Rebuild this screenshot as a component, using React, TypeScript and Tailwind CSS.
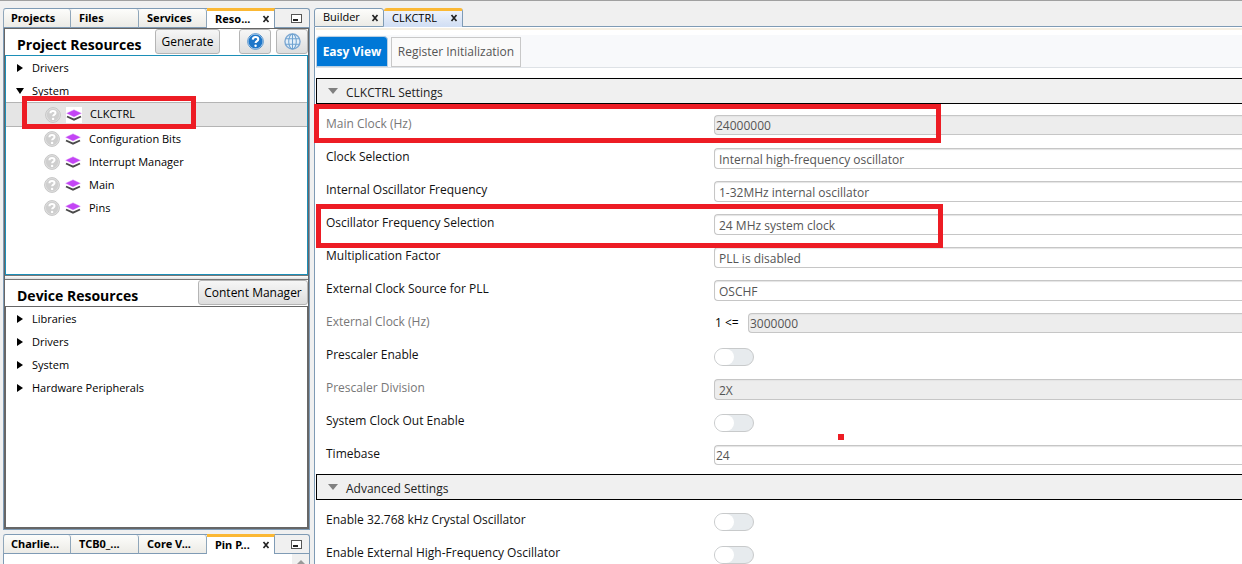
import React from "react";

const MARK = "pointer-events-none absolute z-10 border-5 border-[#ed1c24]";

function CloseIcon() {
  return (
    <svg viewBox="0 0 8 8" className="size-2 shrink-0" aria-hidden="true">
      <path d="M1.500 1l5 6M6.500 1l-5 6" stroke="#222" strokeWidth="1.700" fill="none" />
    </svg>
  );
}

function MinimizeIcon() {
  return (
    <svg viewBox="0 0 11 9" className="h-[9px] w-[11px]" aria-hidden="true">
      <rect x="0.500" y="0.500" width="10" height="8" fill="#fff" stroke="#555" />
      <rect x="2" y="5" width="5" height="2" fill="#222" />
    </svg>
  );
}

function HelpIcon() {
  return (
    <svg viewBox="0 0 18 18" className="size-[17px]" aria-hidden="true">
      <circle cx="9" cy="9" r="8.300" fill="#fff" stroke="#3f86c8" strokeWidth="1" />
      <circle cx="9" cy="9" r="7.500" fill="#1d76c9" />
      <path
        d="M6.100 7c.1-1.900 1.200-2.700 2.900-2.700 1.800 0 2.900.9 2.900 2.300 0 2-2.700 2.100-2.800 4"
        fill="none"
        stroke="#fff"
        strokeWidth="2.200"
      />
      <circle cx="9.100" cy="13.400" r="1.300" fill="#fff" />
    </svg>
  );
}

function GlobeIcon() {
  return (
    <svg viewBox="0 0 18 18" className="size-[17px]" aria-hidden="true">
      <circle cx="9" cy="9" r="8" fill="#e4eff9" stroke="#7fa9d3" strokeWidth="1.500" />
      <ellipse cx="9" cy="9" rx="4" ry="8" fill="none" stroke="#6fa3d0" strokeWidth="1.100" />
      <path d="M9 1v16M1.700 6h14.600M1.700 12h14.600" fill="none" stroke="#6fa3d0" strokeWidth="1.100" />
    </svg>
  );
}

function FadedHelpIcon() {
  return (
    <svg viewBox="0 0 16 16" className="size-4 shrink-0" aria-hidden="true">
      <circle cx="8" cy="8" r="7.400" fill="#e2e2e2" stroke="#c6c6c6" strokeWidth="1" />
      <circle cx="8" cy="8" r="6.200" fill="#cfcfcf" />
      <path
        d="M5.400 6.300c.1-1.600 1.100-2.300 2.600-2.300 1.600 0 2.500.7 2.500 1.900 0 1.700-2.300 1.700-2.400 3.400"
        fill="none"
        stroke="#fff"
        strokeWidth="2"
      />
      <circle cx="8.100" cy="11.900" r="1.200" fill="#fff" />
    </svg>
  );
}

function LayersIcon() {
  return (
    <svg viewBox="0 0 16 16" className="size-4 shrink-0 bg-white" aria-hidden="true">
      <path d="M1 9.500l7 3.200 7-3.200" fill="none" stroke="#4a4a4a" strokeWidth="1.900" />
      <path d="M0 6.200L8 2.600l8 3.600-8 4z" fill="#c345f5" stroke="#fff" strokeWidth="0.500" />
    </svg>
  );
}

function DockTabs({ titles, label }: { titles: string[]; label: string }) {
  const last = titles.length - 1;
  return (
    <div
      role="tablist"
      aria-label={label}
      className="flex h-5 shrink-0 rounded-t-[3px] border-t border-r border-[#7f9bb5] bg-[#f0f0f0] font-['Noto_Sans',sans-serif] text-[11px] font-bold"
    >
      {titles.map((title, i) =>
        i === last ? (
          <button
            key={title}
            role="tab"
            aria-selected="true"
            className="-mt-px flex w-[68px] items-center justify-between border-r border-t-3 border-r-[#7f9bb5] border-t-[#fbb834] bg-white pr-1 pb-px pl-2 leading-4"
          >
            {title}
            <CloseIcon />
          </button>
        ) : (
          <button
            key={title}
            role="tab"
            aria-selected="false"
            className="w-[68px] rounded-t-[3px] border-r border-b border-[#8fa6ba] border-b-[#7f9bb5] bg-linear-to-b from-[#fdfdfb] to-[#ecebe6] pl-2 text-left leading-[18px] first:border-l first:pl-[7px]"
          >
            {title}
          </button>
        )
      )}
      <button aria-label="Minimize" className="flex flex-1 items-center justify-center border-b border-[#7f9bb5] pl-2">
        <MinimizeIcon />
      </button>
    </div>
  );
}

const TOOL_BUTTON =
  "flex h-[25px] items-center justify-center rounded-[3px] border border-[#b5b5b5] bg-linear-to-b from-[#f6f6f6] to-[#dedede]";

function Branch({ title, open = false }: { title: string; open?: boolean }) {
  return (
    <div role="treeitem" aria-expanded={open} className="flex h-[23px] items-center gap-2 pl-[10px]">
      <svg viewBox="0 0 8 8" className="size-2" aria-hidden="true">
        <path d={open ? "M0 1h8L4 7z" : "M1 0l6 4-6 4z"} />
      </svg>
      <span className="pt-[2px]">{title}</span>
    </div>
  );
}

function Leaf({ title }: { title: string }) {
  return (
    <div role="treeitem" className="flex h-[23px] items-center gap-[5px] pl-[38px]">
      <FadedHelpIcon />
      <LayersIcon />
      <span className="pt-[2px] pl-[3px]">{title}</span>
    </div>
  );
}

type Field = {
  label: string;
  kind: "text" | "select" | "toggle";
  value?: string;
  disabled?: boolean;
  prefix?: string;
};

const CLOCK: Field[] = [
  { label: "Main Clock (Hz)", kind: "text", value: "24000000", disabled: true },
  { label: "Clock Selection", kind: "select", value: "Internal high-frequency oscillator" },
  { label: "Internal Oscillator Frequency", kind: "select", value: "1-32MHz internal oscillator" },
  { label: "Oscillator Frequency Selection", kind: "select", value: "24 MHz system clock" },
  { label: "Multiplication Factor", kind: "select", value: "PLL is disabled" },
  { label: "External Clock Source for PLL", kind: "select", value: "OSCHF" },
  { label: "External Clock (Hz)", kind: "text", value: "3000000", disabled: true, prefix: "1 <=" },
  { label: "Prescaler Enable", kind: "toggle" },
  { label: "Prescaler Division", kind: "select", value: "2X", disabled: true },
  { label: "System Clock Out Enable", kind: "toggle" },
  { label: "Timebase", kind: "text", value: "24" },
];

const ADVANCED: Field[] = [
  { label: "Enable 32.768 kHz Crystal Oscillator", kind: "toggle" },
  { label: "Enable External High-Frequency Oscillator", kind: "toggle" },
];

function FieldRow({ field }: { field: Field }) {
  const id = field.label.toLowerCase().replace(/[^a-z0-9]+/g, "-");
  const box =
    "min-w-0 flex-1 appearance-none rounded-l-[4px] border border-r-0 border-[#c6c6c6] text-[#555] leading-[18px] shadow-[inset_0_1px_1px_#e4e4e4]";
  return (
    <div className="flex h-[21px] pl-[10px]">
      <label
        htmlFor={id}
        className={`w-[388px] shrink-0 leading-[18px] ${field.disabled ? "text-[#777]" : "text-[#111]"}`}
      >
        {field.label}
      </label>
      {field.prefix && <span className="w-[34px] shrink-0 pl-px leading-5">{field.prefix}</span>}
      {field.kind === "text" && (
        <input
          id={id}
          defaultValue={field.value}
          disabled={field.disabled}
          className={`${box} h-5 pt-px pl-px disabled:bg-[#ededed]`}
        />
      )}
      {field.kind === "select" && (
        <select
          id={id}
          disabled={field.disabled}
          className={`${box} h-[21px] bg-white pt-[2px] pl-1 opacity-100 disabled:bg-[#ededed] disabled:opacity-100`}
        >
          <option>{field.value}</option>
        </select>
      )}
      {field.kind === "toggle" && (
        <input
          id={id}
          type="checkbox"
          className="mt-[2px] h-[18px] w-10 appearance-none rounded-full border border-[#c8cacb] bg-[#e7ebee] before:block before:h-4 before:w-[19px] before:rounded-full before:bg-white"
        />
      )}
    </div>
  );
}

function Section({ title, fields }: { title: string; fields: Field[] }) {
  return (
    <section>
      <button
        aria-expanded="true"
        className="flex h-[26px] w-full items-center gap-2 border border-r-0 border-black bg-[#f0f0f0] pt-1 pl-[11px] text-[#222]"
      >
        <svg viewBox="0 0 10 6" className="mb-1 h-[6px] w-[10px]" aria-hidden="true">
          <path d="M0 0h10L5 6z" fill="#808080" />
        </svg>
        {title}
      </button>
      <div className="flex flex-col gap-3 pt-[11px] pb-2">
        {fields.map((f) => (
          <FieldRow key={f.label} field={f} />
        ))}
      </div>
    </section>
  );
}

export default function App() {
  return (
    <div className="flex h-screen gap-1 overflow-hidden border-t border-[#a0a0a0] bg-[#f0f0f0] pt-[7px] pl-[3px] font-['Open_Sans','Noto_Sans',sans-serif] text-black">
      <aside className="relative flex w-[307px] shrink-0 flex-col text-[11px]">
        <DockTabs label="Project windows" titles={["Projects", "Files", "Services", "Reso..."]} />
        <div className="flex min-h-0 flex-1 flex-col border-x border-b border-[#7f9bb5]">
          <div className="flex min-h-0 flex-1 flex-col border border-b-2 border-[#666] bg-white">
            <div className="flex h-[26px] shrink-0">
              <h2 className="w-[150px] pt-[6px] pl-3 text-sm leading-5 font-bold whitespace-nowrap">Project Resources</h2>
              <button className={`${TOOL_BUTTON} w-[65px] text-xs`}>Generate</button>
              <button aria-label="Help" className={`${TOOL_BUTTON} ml-auto w-8`}>
                <HelpIcon />
              </button>
              <button aria-label="Web" className={`${TOOL_BUTTON} ml-[5px] w-8`}>
                <GlobeIcon />
              </button>
            </div>
            <div role="tree" aria-label="Project Resources" className="h-[220px] shrink-0 border border-[#1c8fb8]">
              <Branch title="Drivers" />
              <Branch title="System" open />
              <div
                role="treeitem"
                aria-selected="true"
                className="relative flex h-[25px] items-center gap-[5px] border-y border-[#b4b4b4] bg-[#e5e5e5] pl-[39px]"
              >
                <FadedHelpIcon />
                <LayersIcon />
                <span className="pl-[3px]">CLKCTRL</span>
                <span className={`${MARK} -top-[7px] left-4 h-[33px] w-[174px]`} />
              </div>
              <Leaf title="Configuration Bits" />
              <Leaf title="Interrupt Manager" />
              <Leaf title="Main" />
              <Leaf title="Pins" />
            </div>
            <div className="h-[5px] shrink-0 border-y border-[#777] bg-linear-to-b from-white to-[#ddd]" />
            <div className="flex h-[26px] shrink-0 justify-between">
              <h2 className="pt-[6px] pl-3 text-sm leading-5 font-bold">Device Resources</h2>
              <button className={`${TOOL_BUTTON} w-[110px] text-xs`}>Content Manager</button>
            </div>
            <div role="tree" aria-label="Device Resources" className="min-h-0 flex-1 border border-b-0 border-[#666]">
              <Branch title="Libraries" />
              <Branch title="Drivers" />
              <Branch title="System" />
              <Branch title="Hardware Peripherals" />
            </div>
          </div>
        </div>
        <div className="mt-1 shrink-0">
          <DockTabs label="Device windows" titles={["Charlie...", "TCB0_...", "Core V...", "Pin P..."]} />
          <div className="flex h-[10px] justify-end border-x border-[#7f9bb5] bg-white">
            <div className="flex w-[17px] items-end justify-center bg-[#f0f0f0]">
              <svg viewBox="0 0 8 4" className="h-1 w-2" aria-hidden="true">
                <path d="M0 4l4-4 4 4z" fill="#999" />
              </svg>
            </div>
          </div>
        </div>
      </aside>

      <main className="relative flex min-w-0 flex-1 flex-col text-xs">
        <div role="tablist" aria-label="Editors" className="flex h-[19px] shrink-0 text-[11px]">
          <button
            role="tab"
            aria-selected="false"
            className="flex w-[70px] items-center justify-between rounded-t-[3px] border border-[#7f9bb5] bg-linear-to-b from-[#fdfdfb] to-[#ecebe6] pr-1 pl-2"
          >
            Builder
            <CloseIcon />
          </button>
          <button
            role="tab"
            aria-selected="true"
            className="flex w-[79px] items-center justify-between rounded-t-[3px] border-t-3 border-r border-t-[#fbb834] border-r-[#7f9bb5] bg-linear-to-b from-[#eef2fb] to-[#d0def4] pr-1 pb-[2px] pl-2"
          >
            CLKCTRL
            <CloseIcon />
          </button>
          <div className="flex-1 border-b border-[#7f9bb5]" />
        </div>
        <div className="min-h-0 flex-1 overflow-hidden border-l border-[#7f9bb5] bg-white pl-px">
          <div className="mt-px h-[2px] bg-[#f5efe3]" />
          <div role="tablist" aria-label="Views" className="mt-[5px] mb-[10px] flex h-[33px] items-end gap-[3px] border-b border-[#dee2e6] bg-[#f8f9fb]">
            <button role="tab" aria-selected="true" className="h-[31px] w-[72px] rounded-t-[4px] border border-[#b9cfe3] bg-[#0078d7] text-xs font-bold text-white">
              Easy View
            </button>
            <button role="tab" aria-selected="false" className="h-[30px] w-[130px] border border-[#c8c8c8] bg-[#fafafa] text-xs text-[#555]">
              Register Initialization
            </button>
          </div>
          <Section title="CLKCTRL Settings" fields={CLOCK} />
          <Section title="Advanced Settings" fields={ADVANCED} />
        </div>
        <span className={`${MARK} top-24 left-0 h-[39px] w-[627px]`} />
        <span className={`${MARK} top-[196px] left-[2px] h-11 w-[627px]`} />
        <span className="pointer-events-none absolute top-[426px] left-[524px] size-[6px] bg-[#ed1c24]" />
      </main>
    </div>
  );
}
